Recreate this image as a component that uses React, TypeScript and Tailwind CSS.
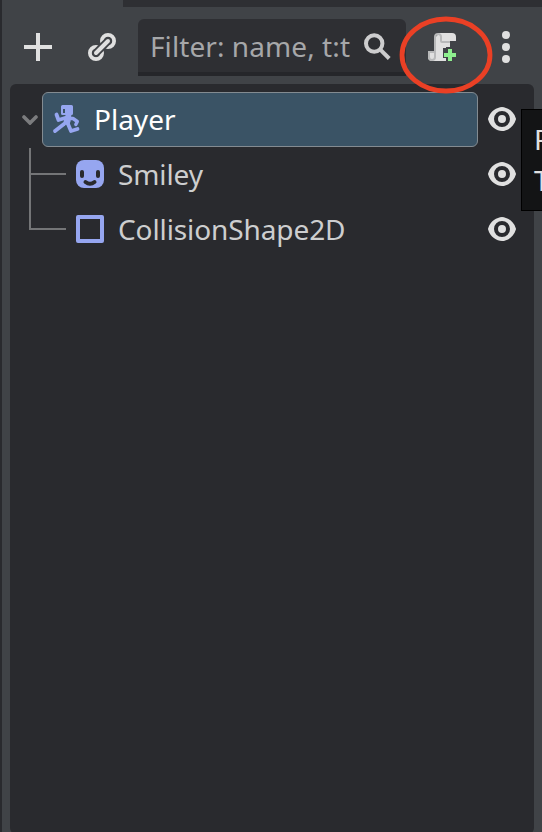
import type { ReactNode } from "react";

function Icon({ children, className = "" }: { children: ReactNode; className?: string }) {
  return (
    <svg viewBox="0 0 32 32" className={`h-8 w-8 shrink-0 ${className}`} fill="none">
      {children}
    </svg>
  );
}

function AddIcon() {
  return (
    <Icon>
      <path d="M14 2h4v12h12v4H18v12h-4V18H2v-4h12z" fill="#e0e0e0" />
    </Icon>
  );
}

function LinkIcon() {
  return (
    <Icon>
      <g strokeLinecap="round">
        <circle cx="10" cy="22" r="6" stroke="#e0e0e0" strokeWidth="4" />
        <circle cx="22" cy="10" r="6" stroke="#e0e0e0" strokeWidth="4" />
        <path d="M10 22 22 10" stroke="#404347" strokeWidth="8" />
        <path d="M10 22 22 10" stroke="#e0e0e0" strokeWidth="4" />
      </g>
    </Icon>
  );
}

function SearchIcon() {
  return (
    <Icon>
      <circle cx="13.2" cy="12.5" r="8.2" stroke="#cdcdce" strokeWidth="4" />
      <path d="m18.8 18.1 9.4 9.4" stroke="#cdcdce" strokeWidth="4" />
    </Icon>
  );
}

function ScriptCreateIcon() {
  return (
    <Icon>
      <g transform="scale(2)">
        <path
          d="M6 1v1a1 1 0 0 0-1 1v10H4v-2H1v2a2 2 0 0 0 2 2h7v-1.500H8.500v-5H10V8h2V5h3V3a2 2 0 0 0-2-2z"
          fill="#e0e0e0"
        />
        <path
          d="M6 1a2 2 0 0 0-2 2v7H1v3a2 2 0 0 0 4 0V3a1 1 0 0 1 2 0v2a1 1 0 0 0 1 1h4V5H8V3a2 2 0 0 0-2-2zM2 11h2v2a1 1 0 0 1-2 0z"
          fill="#b8b9ba"
          fillRule="evenodd"
        />
        <path d="M11 9h2v2h2v2h-2v2h-2v-2H9v-2h2z" fill="#8eef8e" />
      </g>
    </Icon>
  );
}

function MenuIcon() {
  return (
    <Icon>
      <g fill="#e0e0e0">
        <circle cx="16" cy="4" r="4" />
        <circle cx="16" cy="16" r="4" />
        <circle cx="16" cy="28" r="4" />
      </g>
    </Icon>
  );
}

function CharacterIcon() {
  return (
    <Icon>
      <path
        d="M12.500 2h9q1.500 0 1.500 1.500v7q0 1.500-1.500 1.500h-9q-1.500 0-1.500-1.500v-7Q11 2 12.500 2zM13 6v4h2V6z"
        fill="#96a6f0"
        fillRule="evenodd"
      />
      <path d="M16 11h5.500l-1 7.500-1.500 4-6-1.500 1.500-6z" fill="#96a6f0" />
      <g stroke="#96a6f0" strokeWidth="3.800" strokeLinecap="round" strokeLinejoin="round">
        <path d="M6.500 11.500 8.500 17l6.500-2" />
        <path d="M20 15.500h3L27.300 18.500l-1.500 3" strokeWidth="3.400" />
        <path d="m5 28 9-7" />
        <path d="m18 21 3 7 6.500-2" />
      </g>
    </Icon>
  );
}

function SpriteIcon() {
  return (
    <Icon>
      <rect x="2" y="2" width="28" height="28" rx="8" fill="#96a6f0" />
      <rect x="6" y="12" width="4" height="8" rx="2" fill="#292a2e" />
      <rect x="22" y="12" width="4" height="8" rx="2" fill="#292a2e" />
      <path d="M11.500 24q4.500 3.600 9 0" stroke="#292a2e" strokeWidth="4" strokeLinecap="round" />
    </Icon>
  );
}

function CollisionIcon() {
  return (
    <Icon>
      <rect x="4" y="4" width="24" height="24" stroke="#96a6f0" strokeWidth="4" strokeLinejoin="round" />
    </Icon>
  );
}

function EyeIcon() {
  return (
    <Icon>
      <path
        d="M16 4C10.900 4.400 4.400 7.900 2.100 15.400a2 2 0 0 0 0 1.200C4.200 24.100 10.800 28 16 28s11.800-3.900 13.900-11.400a2 2 0 0 0 0-1.200C27.700 7.900 21 4.400 16 4zm0 4a8 8 0 0 1 0 16 8 8 0 0 1 0-16zm0 4a4 4 0 0 0 0 8 4 4 0 0 0 0-8z"
        fill="#e0e0e0"
      />
    </Icon>
  );
}

function Chevron() {
  return (
    <svg viewBox="0 0 16 10" className="h-[10px] w-4 shrink-0" fill="none">
      <path d="m2 2 6 6 6-6" stroke="#7b7c7e" strokeWidth="3.600" strokeLinecap="round" />
    </svg>
  );
}

function Branch({ last = false }: { last?: boolean }) {
  return (
    <div className={`flex h-full w-[37px] shrink-0 flex-col ${last ? "" : "pt-px"}`}>
      <div
        className={
          last
            ? "h-[28px] border-b-2 border-l-2 border-[#747577]"
            : "h-[27px] border-b-2 border-l-2 border-[#747577]"
        }
      />
      {!last && <div className="flex-1 border-l-2 border-[#747577]" />}
    </div>
  );
}

export default function App() {
  return (
    <div className="relative flex h-[832px] w-[542px] flex-col overflow-hidden border-l-2 border-[#292a2e] bg-[#404347] font-['Noto_Sans',sans-serif] text-[28px] leading-[55px]">
      <div className="ml-[121px] h-[7px] shrink-0 bg-[#2e2f33]" />

      <div className="flex h-[77px] shrink-0 pt-3 pl-5">
        <div className="flex h-14 items-center gap-8">
          <AddIcon />
          <LinkIcon />
        </div>
        <div className="ml-5 flex h-[57px] w-[268px] items-center rounded-t-[6px] border-b-4 border-[#25262a] bg-[#2e2f33] pt-[2px] pr-[13px] pl-3">
          <span className="w-[211px] overflow-hidden tracking-[0.08px] whitespace-nowrap text-[#a6a7a9]">
            Filter: name, t:t
          </span>
          <SearchIcon />
        </div>
        <div className="ml-5 flex h-14 items-center gap-8">
          <ScriptCreateIcon />
          <MenuIcon />
        </div>
      </div>

      <div className="mr-2 ml-2 h-[750px] shrink-0 rounded-[6px] bg-[#292a2e] pt-2">
        <div className="flex h-[55px] items-center">
          <div className="flex w-8 shrink-0 justify-center pl-2">
            <Chevron />
          </div>
          <div className="flex h-[55px] w-[436px] items-center rounded-[6px] border border-[#838b91] bg-[#3a5365] pl-[7px] text-white">
            <div className="pb-px">
              <CharacterIcon />
            </div>
            <span className="ml-3">Player</span>
          </div>
          <div className="ml-2 pb-px">
            <EyeIcon />
          </div>
        </div>
        <div className="flex h-[55px] items-center pl-[19px] tracking-[-0.1px] text-[#cdcecf]">
          <Branch />
          <div className="ml-2 pb-px">
            <SpriteIcon />
          </div>
          <span className="ml-3 flex-1">Smiley</span>
          <div className="mr-4 pb-px">
            <EyeIcon />
          </div>
        </div>
        <div className="flex h-[55px] items-center pl-[19px] tracking-[-0.1px] text-[#cdcecf]">
          <Branch last />
          <div className="ml-2 pb-px">
            <CollisionIcon />
          </div>
          <span className="ml-3 flex-1">CollisionShape2D</span>
          <div className="mr-4 pb-px">
            <EyeIcon />
          </div>
        </div>
      </div>

      <svg viewBox="0 0 94 78" className="absolute top-4 left-[397px] h-[78px] w-[94px]" fill="none">
        <ellipse cx="47" cy="39" rx="44" ry="36" stroke="#ea4025" strokeWidth="4.800" />
      </svg>

      <div className="absolute top-[109px] left-[519px] h-[102px] w-[240px] border border-black bg-[#131415] pt-[9px] pl-[12px] leading-[41px] whitespace-nowrap text-[#e0e0e0]">
        <div>P</div>
        <div>T</div>
      </div>
    </div>
  );
}
